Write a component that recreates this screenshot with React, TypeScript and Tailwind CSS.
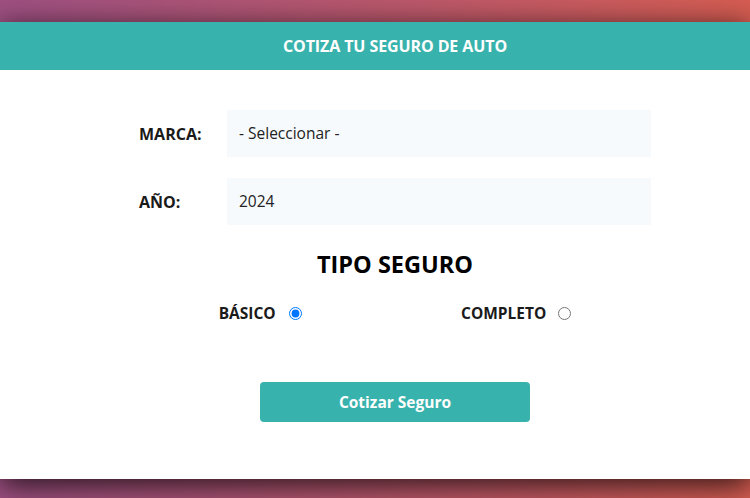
import { useState } from "react";

const App = () => {
  const [plan, setPlan] = useState("basico");

  return (
    <div
      className="min-h-screen w-full bg-linear-to-r from-[#9e5082] to-[#d65d52] pt-[22px]"
      style={{ fontFamily: '"Open Sans", "Noto Sans", sans-serif' }}
    >
      <div className="w-full bg-white shadow-[0_6px_28px_rgba(0,0,0,0.8)]">
        <header className="flex h-12 items-center justify-center bg-[#38b2ac] pl-10">
          <h1 className="text-[16px] font-bold tracking-[-0.1px] text-white">COTIZA TU SEGURO DE AUTO</h1>
        </header>

        <div className="flex justify-center pl-10 pt-10 pb-[57px]">
          <form className="flex w-[512px] flex-col">
            <div className="flex items-center">
              <label className="w-[88px] text-[16px] font-bold text-[#1a1a1a]">MARCA:</label>
              <select className="h-[47px] flex-1 appearance-none rounded-none bg-[#f7fafc] px-[12px] text-[15.5px] text-[#222] outline-none">
                <option>- Seleccionar -</option>
              </select>
            </div>

            <div className="mt-[21px] flex items-center">
              <label className="w-[88px] text-[16px] font-bold text-[#1a1a1a]">AÑO:</label>
              <select className="h-[47px] flex-1 appearance-none rounded-none bg-[#f7fafc] px-[12px] text-[15.5px] text-[#222] outline-none">
                <option>2024</option>
              </select>
            </div>

            <h2 className="mt-[23px] text-center text-[23.5px] leading-8 font-bold text-black">TIPO SEGURO</h2>

            <div className="mt-[22px] flex justify-around">
              <label className="flex items-center gap-[13px] text-[15.5px] font-bold text-[#1a1a1a]">
                BÁSICO
                <input
                  type="radio"
                  name="plan"
                  checked={plan === "basico"}
                  onChange={() => setPlan("basico")}
                  className="m-0 h-[13px] w-[13px]"
                />
              </label>
              <label className="flex items-center gap-[12px] text-[15.5px] font-bold text-[#1a1a1a]">
                COMPLETO
                <input
                  type="radio"
                  name="plan"
                  checked={plan === "completo"}
                  onChange={() => setPlan("completo")}
                  className="m-0 h-[13px] w-[13px]"
                />
              </label>
            </div>

            <button
              type="button"
              className="mx-auto mt-[57px] h-[40px] w-[270px] rounded bg-[#38b2ac] text-[15.5px] font-bold text-white"
            >
              Cotizar Seguro
            </button>
          </form>
        </div>
      </div>
    </div>
  );
};

export default App;
